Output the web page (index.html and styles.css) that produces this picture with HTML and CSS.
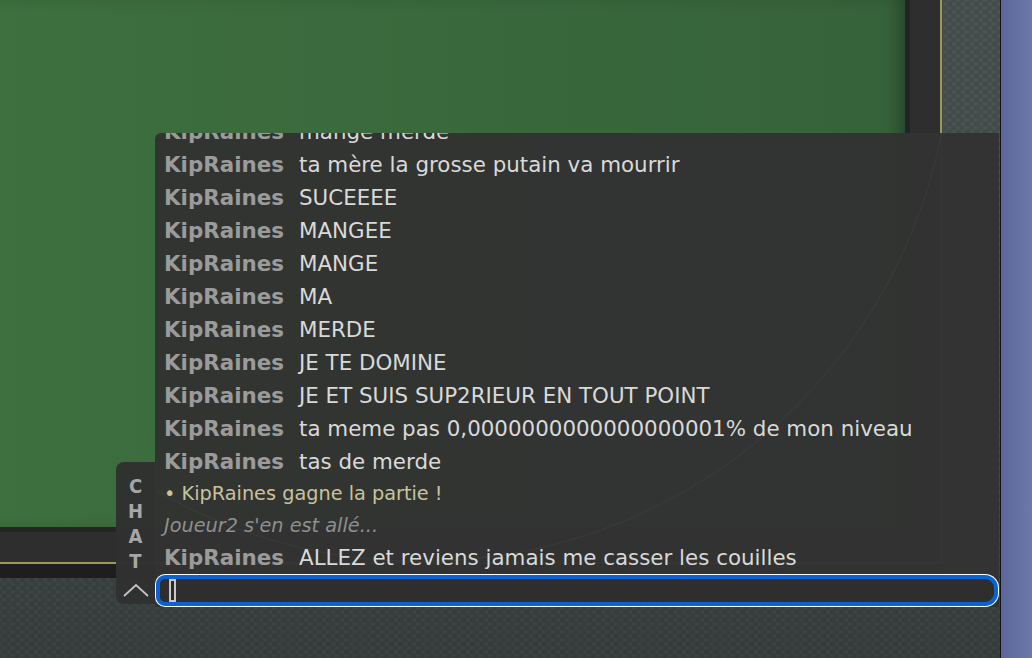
FILE: index.html
```html
<!DOCTYPE html>
<html lang="fr">
<head>
  <meta charset="UTF-8" />
  <meta name="viewport" content="width=device-width, initial-scale=1.0" />
  <title>Table – Chat</title>
  <link rel="stylesheet" href="styles.css">
</head>
<body>
  <div class="room">
    <div class="scene">
      <div class="rail">
        <div class="felt"></div>
      </div>

      <!-- CHAT -->
      <div class="chat">
        <div class="chat-tab">
          <span class="chat-letters">C<br>H<br>A<br>T</span>
          <svg class="chevron" width="26" height="16" viewBox="0 0 26 16">
            <polyline points="1,14 13,3 25,14" fill="none" stroke="#c4c4c4" stroke-width="1.8" />
          </svg>
        </div>

        <div class="chat-main">
          <div class="arc"></div>
          <div class="messages">
            <div class="msg"><span class="name">KipRaines</span>mange merde</div>
            <div class="msg"><span class="name">KipRaines</span>ta mère la grosse putain va mourrir</div>
            <div class="msg"><span class="name">KipRaines</span>SUCEEEE</div>
            <div class="msg"><span class="name">KipRaines</span>MANGEE</div>
            <div class="msg"><span class="name">KipRaines</span>MANGE</div>
            <div class="msg"><span class="name">KipRaines</span>MA</div>
            <div class="msg"><span class="name">KipRaines</span>MERDE</div>
            <div class="msg"><span class="name">KipRaines</span>JE TE DOMINE</div>
            <div class="msg"><span class="name">KipRaines</span>JE ET SUIS SUP2RIEUR EN TOUT POINT</div>
            <div class="msg"><span class="name">KipRaines</span>ta meme pas 0,0000000000000000001% de mon niveau</div>
            <div class="msg"><span class="name">KipRaines</span>tas de merde</div>
            <div class="info win">• KipRaines gagne la partie !</div>
            <div class="info leave">Joueur2 s'en est allé...</div>
            <div class="msg"><span class="name">KipRaines</span>ALLEZ et reviens jamais me casser les couilles</div>
          </div>
          <div class="chat-input"><span class="caret"></span></div>
        </div>
      </div>
    </div>
    <div class="side"></div>
  </div>
</body>
</html>
```

FILE: styles.css
```css
:root {
  --tapis: #3c6d3e;
  --bois: #2e2e2e;
  --or: #9d985a;
  --fond-chat: rgba(50, 51, 50, 0.97);
  --bleu: #0a63d3;
}

body {
  margin: 0;
  font-family: "DejaVu Sans", sans-serif;
  background: #3f4545;
}

.room {
  display: flex;
  width: 1032px;
  height: 658px;
  overflow: hidden;
}

.scene {
  position: relative;
  width: 1000px;
  background:
    radial-gradient(circle, rgba(0, 0, 0, 0.12) 2px, transparent 3.5px) 0 0 / 9px 8px,
    radial-gradient(circle, rgba(0, 0, 0, 0.1) 2px, transparent 3.5px) 4px 4px / 9px 8px,
    linear-gradient(#4d5555, #485151 60%, #3b4242);
}

.side {
  width: 31px;
  border-left: 1px solid #111;
  box-shadow: -2px 0 0 #7e8484;
  background: linear-gradient(to right, #5b6799, #6e78aa);
}

.rail {
  width: 940px;
  height: 562px;
  background: var(--bois);
  border-right: 2px solid var(--or);
  border-bottom: 2px solid var(--or);
  box-shadow: 0 14px 0 #1e1e1e;
}

.felt {
  width: 905px;
  height: 527px;
  background: linear-gradient(to right, #3d6f3f, #36623a);
  border-right: 5px solid #232323;
  border-bottom: 5px solid #252525;
  box-shadow: inset -14px 0 18px -8px rgba(0, 0, 0, 0.3);
}

/* CHAT */
.chat {
  position: absolute;
  left: 116px;
  top: 133px;
  width: 883px;
  height: 474px;
  display: flex;
  align-items: flex-end;
}

.chat-tab {
  width: 39px;
  height: 142px;
  margin-bottom: 3px;
  background: rgba(47, 49, 47, 0.97);
  border-radius: 8px 0 0 8px;
  display: flex;
  flex-direction: column;
  align-items: center;
  padding-top: 12px;
  box-sizing: border-box;
}

.chat-letters {
  color: #a6a6a6;
  font-family: "DejaVu Sans Condensed", "DejaVu Sans", sans-serif;
  font-weight: 700;
  font-size: 20px;
  line-height: 25px;
  text-align: center;
}

.chevron {
  margin-top: 8px;
}

.chat-main {
  position: relative;
  flex: 1;
  height: 100%;
  display: flex;
  flex-direction: column;
  justify-content: flex-end;
  background: var(--fond-chat);
  border-top-left-radius: 6px;
  overflow: hidden;
}

.arc {
  position: absolute;
  left: -265px;
  top: -633px;
  width: 1060px;
  height: 1060px;
  border-radius: 50%;
  border: 1px solid rgba(200, 190, 150, 0.07);
}

.messages {
  position: relative;
  margin-bottom: 1px;
  padding-left: 9px;
  font-size: 21.4px;
}

.msg {
  height: 33px;
  line-height: 33px;
  color: #d9d9d9;
  white-space: nowrap;
}

.name {
  display: inline-block;
  width: 135px;
  color: #9b9b9b;
  font-weight: 700;
}

.info {
  height: 31.5px;
  line-height: 31.5px;
  font-size: 19.3px;
}

.win {
  color: #c9c29b;
}

.leave {
  color: #8f8f8f;
  font-style: italic;
}

.chat-input {
  position: relative;
  height: 29px;
  margin: 0 1px 1px;
  background: #2e2e2e;
  border: 4px solid var(--bleu);
  border-radius: 9px 13px 13px 9px;
  box-shadow: 0 0 0 1px #fff;
  display: flex;
  align-items: center;
  padding-left: 9px;
}

.caret {
  width: 3px;
  height: 19px;
  border: 2px solid #c8c8c8;
  background: #2a2a2a;
}
```
